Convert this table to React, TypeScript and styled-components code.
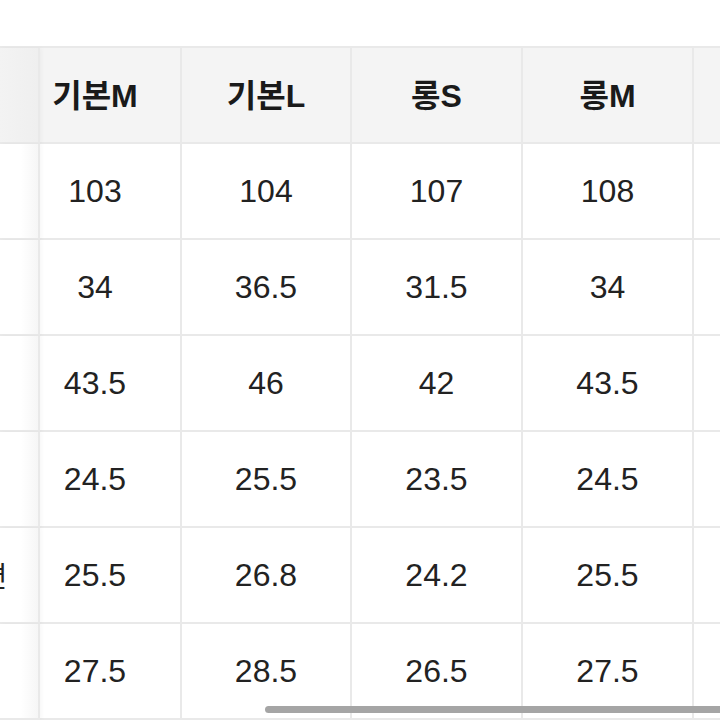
import React from "react";
import styled, { createGlobalStyle } from "styled-components";

const GlobalStyle = createGlobalStyle`
  html, body {
    margin: 0;
    padding: 0;
    background: #ffffff;
  }
  body {
    font-family: "Liberation Sans", "Noto Sans CJK KR", sans-serif;
    color: #1e1e1e;
  }
`;

const headers = ["기본M", "기본L", "롱S", "롱M"];

// only the longest label reaches into the visible strip of the sticky column
const rows = [
  { label: "", values: ["103", "104", "107", "108"] },
  { label: "", values: ["34", "36.5", "31.5", "34"] },
  { label: "", values: ["43.5", "46", "42", "43.5"] },
  { label: "", values: ["24.5", "25.5", "23.5", "24.5"] },
  { label: "허벅지 단면", values: ["25.5", "26.8", "24.2", "25.5"] },
  { label: "", values: ["27.5", "28.5", "26.5", "27.5"] },
];

const LINE = "#e9e9e9";

const Page = styled.div`
  position: relative;
  width: 720px;
  height: 720px;
  overflow: hidden;
  background: #ffffff;
`;

const Table = styled.div`
  display: grid;
  grid-template-columns: 40px 142px 170px 171px 171px 171px;
  grid-auto-rows: 96px;
  margin-top: 46px;
  width: 865px;
  border-top: 2px solid ${LINE};
`;

const LabelCell = styled.div<{ $head?: boolean }>`
  display: flex;
  align-items: center;
  justify-content: flex-end;
  overflow: hidden;
  white-space: nowrap;
  border-right: 2px solid ${LINE};
  border-bottom: 2px solid ${LINE};
  background: ${(p) =>
    p.$head
      ? "linear-gradient(to right, #f3f3f3, #efefef)"
      : "linear-gradient(to right, #ffffff 55%, #f6f6f6)"};
  box-shadow: 2px 0 4px rgba(0, 0, 0, 0.03);
  z-index: 1;
`;

const LabelText = styled.span`
  flex: none;
  width: 198px;
  text-align: center;
  font-size: 28px;
  color: #222222;
`;

const Cell = styled.div<{ $head?: boolean; $shift?: boolean }>`
  display: flex;
  align-items: center;
  justify-content: center;
  border-right: 2px solid ${LINE};
  border-bottom: 2px solid ${LINE};
  background: ${(p) => (p.$head ? "#f4f4f4" : "#ffffff")};
  padding-right: ${(p) => (p.$shift ? "30px" : "0")};
  padding-bottom: ${(p) => (p.$head ? "4px" : "0")};
  font-size: 32px;
  font-weight: ${(p) => (p.$head ? 700 : 400)};
  color: ${(p) => (p.$head ? "#1a1a1a" : "#222222")};
  white-space: nowrap;
`;

const ScrollThumb = styled.div`
  position: absolute;
  left: 265px;
  right: -6px;
  top: 706px;
  height: 7px;
  border-radius: 4px;
  background: #a5a5a5;
`;

export default function App() {
  return (
    <>
      <GlobalStyle />
      <Page>
        <Table>
          <LabelCell $head />
          {headers.map((h, i) => (
            <Cell key={h} $head $shift={i === 0}>
              {h}
            </Cell>
          ))}
          <Cell $head />
          {rows.map((r, ri) => (
            <React.Fragment key={ri}>
              <LabelCell>
                {r.label && <LabelText>{r.label}</LabelText>}
              </LabelCell>
              {r.values.map((v, i) => (
                <Cell key={i} $shift={i === 0}>
                  {v}
                </Cell>
              ))}
              <Cell />
            </React.Fragment>
          ))}
        </Table>
        <ScrollThumb />
      </Page>
    </>
  );
}
